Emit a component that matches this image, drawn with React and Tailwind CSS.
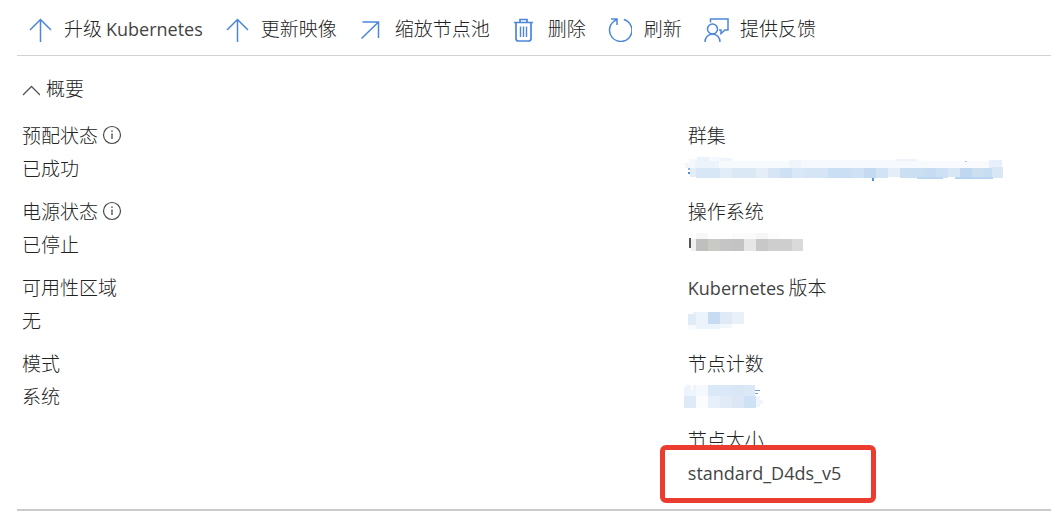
import { useState } from 'react'

const iconProps = {
  width: 24,
  height: 24,
  viewBox: '0 0 24 24',
  fill: 'none',
  stroke: '#4b86d9',
  strokeWidth: 1.5,
  'aria-hidden': true,
}

const ArrowUp = () => (
  <svg {...iconProps}>
    <path d="M12.5 24V1.5M2 12L12.5 1.5L23 12" />
  </svg>
)

const ArrowUpRight = () => (
  <svg {...iconProps}>
    <path d="M2.500 20.500L19.500 4M3.500 4H19.500V20" />
  </svg>
)

const Trash = () => (
  <svg {...iconProps}>
    <path d="M2 4.500H21M4 4.500V20.500Q4 23 6.500 23H16.500Q19 23 19 20.500V4.500M8 4V1.500H15V4" strokeWidth="1.700" />
    <path d="M8.500 8.500V19M11.500 8.500V19M14.500 8.500V19" strokeWidth="1.400" />
  </svg>
)

const Refresh = () => (
  <svg {...iconProps}>
    <path d="M15.800 1.500A11.200 11.200 0 1 1 8.500 1.900M3 1H9V7" />
  </svg>
)

const Feedback = () => (
  <svg {...iconProps} overflow="visible">
    <circle cx="8.500" cy="11" r="5" />
    <path d="M1 24A7.500 8 0 0 1 16 24M6.500 4.500V1H24V12H21L17 15.500V12H15" />
  </svg>
)

const InfoIcon = () => (
  <svg className="mb-1" width="20" height="20" viewBox="0 0 20 20" fill="none" stroke="#4a4a4a" aria-hidden="true">
    <circle cx="10" cy="10" r="8.500" strokeWidth="1.200" />
    <path d="M10 8.500V14M10 5.500V7" strokeWidth="1.300" />
  </svg>
)

const commands = [
  { icon: ArrowUp, label: '升级', product: 'Kubernetes' },
  { icon: ArrowUp, label: '更新映像' },
  { icon: ArrowUpRight, label: '缩放节点池' },
  { icon: Trash, label: '删除' },
  { icon: Refresh, label: '刷新' },
  { icon: Feedback, label: '提供反馈' },
]

// Masked values: [x, y, width, height, colour]
const masks = {
  cluster: {
    viewBox: '-1 2 322 26',
    cells: [
      [0, 8, 16, 5, '#f1f6fc'], [3, 13, 2, 2, '#8db5e3'], [3, 17, 2, 2, '#4b8dd8'],
      [4, 4, 8, 9, '#f5f9fd'], [12, 2, 12, 6, '#eaf2fa'], [24, 2, 12, 6, '#f5f9fd'],
      [10, 6, 24, 7, '#ebf3fb'], [34, 3, 13, 4, '#edf4fb'], [34, 6, 70, 7, '#f7fafd'],
      [104, 5, 12, 8, '#f0f5fb'], [116, 5, 120, 8, '#f6f9fd'], [212, 4, 20, 2, '#eef3fa'],
      [236, 6, 70, 7, '#f8fafd'], [304, 5, 13, 8, '#e7f0fa'],
      [5, 13, 6, 9, '#e2edf8'], [11, 13, 24, 10, '#d8e7f5'], [35, 13, 12, 10, '#e2edf8'],
      [47, 13, 24, 10, '#dae8f6'], [71, 13, 12, 10, '#e4edf8'], [83, 13, 12, 10, '#d7e5f4'],
      [95, 13, 12, 10, '#cee0f3'], [107, 13, 12, 10, '#d9e7f6'], [119, 13, 24, 10, '#d6e5f5'],
      [143, 13, 24, 10, '#cbdff4'], [167, 13, 12, 10, '#cfe1f4'], [179, 13, 12, 10, '#c3daf0'],
      [191, 13, 12, 10, '#d1e3f4'], [203, 13, 12, 9, '#e4edf8'], [215, 13, 24, 10, '#cbdff3'],
      [239, 13, 12, 10, '#c7dcf2'], [251, 13, 12, 10, '#cee1f4'], [263, 13, 12, 9, '#d7e7f6'],
      [275, 13, 12, 10, '#bfd8ef'], [287, 13, 12, 10, '#ccdff1'], [299, 13, 8, 10, '#c7ddf3'],
      [307, 12, 11, 11, '#d9e7f5'], [232, 22, 26, 2, '#bdd7f2'], [270, 22, 38, 2, '#b8d4f0'],
      [187, 23, 2, 3, '#4f94dc'], [280, 6, 2, 1, '#a9c1dd'],
    ],
  },
  os: {
    viewBox: '-2 1 120 26',
    cells: [
      [3, 6, 2, 10, '#555555'], [5, 7, 5, 12, '#f0f0f0'], [10, 1, 12, 6, '#f7f7f7'],
      [46, 1, 24, 6, '#fbfbfb'], [70, 1, 12, 6, '#f6f6f6'], [82, 1, 12, 6, '#fcfcfc'],
      [10, 7, 12, 12, '#bfbfbf'], [22, 7, 12, 12, '#c9c9c6'], [34, 7, 12, 12, '#c5c5c5'],
      [46, 7, 12, 12, '#c3c3c3'], [58, 7, 12, 12, '#e6e6e6'], [70, 7, 12, 12, '#c8c8c8'],
      [82, 7, 24, 12, '#cecece'], [106, 7, 11, 12, '#dadada'],
    ],
  },
  version: {
    viewBox: '-2 2 64 26',
    cells: [
      [2, 7, 8, 11, '#e0ebf8'], [7, 5, 3, 3, '#e6effa'], [10, 5, 12, 12, '#edf3fc'],
      [22, 5, 12, 12, '#c7dcf2'], [34, 5, 12, 12, '#e0eaf7'], [46, 5, 12, 12, '#e9f0fa'],
      [2, 18, 8, 5, '#f8fafd'], [10, 17, 24, 5, '#ebf3fb'], [34, 17, 12, 4, '#f2f6fd'],
    ],
  },
  count: {
    viewBox: '0 1 84 26',
    cells: [
      [0, 3, 12, 9, '#edf4fc'], [2, 1, 10, 2, '#edf4fc'], [7, 1, 2, 5, '#ffffff'],
      [12, 1, 12, 11, '#f5f9fd'], [24, 1, 24, 11, '#dbe8f7'], [48, 1, 12, 11, '#d8e6f6'],
      [60, 1, 11, 11, '#dde8f7'], [71, 6, 5, 1, '#6499d3'], [71, 9, 3, 1, '#78a6da'],
      [0, 12, 12, 12, '#dfeaf8'], [12, 12, 12, 12, '#fbfcfe'], [24, 12, 12, 12, '#e7effa'],
      [36, 12, 12, 12, '#e1ebf8'], [48, 12, 12, 12, '#dbe7f6'], [60, 12, 12, 12, '#cfe1f4'],
      [72, 12, 4, 11, '#eff5fc'], [76, 16, 3, 4, '#eff5fc'],
    ],
  },
}

const Mask = ({ name }) => {
  const { viewBox, cells } = masks[name]
  const [, , width, height] = viewBox.split(' ')
  return (
    <svg className="-ml-1 shrink-0" width={width} height={height} viewBox={viewBox} shapeRendering="crispEdges" aria-hidden="true">
      {cells.map(([x, y, w, h, fill], i) => (
        <rect key={i} x={x} y={y} width={w} height={h} fill={fill} />
      ))}
    </svg>
  )
}

const Latin = ({ children }) => <span className="text-[18px] font-normal text-[#444]">{children}</span>

const leftFields = [
  { label: '预配状态', info: true, value: '已成功' },
  { label: '电源状态', info: true, value: '已停止' },
  { label: '可用性区域', value: '无' },
  { label: '模式', value: '系统' },
]

const rightFields = [
  { label: '群集', mask: 'cluster' },
  { label: '操作系统', mask: 'os' },
  { label: '版本', product: 'Kubernetes', mask: 'version' },
  { label: '节点计数', mask: 'count' },
  { label: '节点大小', size: 'standard_D4ds_v5', highlight: true },
]

function Field({ label, product, info, value, size, mask, highlight }) {
  return (
    <div className="relative">
      <dt className="flex h-[33px] items-center gap-1">
        {product && <Latin>{product}</Latin>}
        {label}
        {info && <InfoIcon />}
      </dt>
      <dd className="flex h-[33px] items-center">
        {mask && <Mask name={mask} />}
        {size && <Latin>{size}</Latin>}
        {value}
      </dd>
      {highlight && (
        <div className="pointer-events-none absolute top-[21px] -left-7 h-[58px] w-[216px] rounded-md border-5 border-[#ea3d2f]" />
      )}
    </div>
  )
}

export default function App() {
  const [open, setOpen] = useState(true)

  return (
    <main className="bg-white pl-[17px] font-['Open_Sans','Noto_Sans_CJK_SC',sans-serif] text-[19px] leading-[33px] font-light text-[#222]">
      <div className="flex gap-[22px] border-b border-[#d2d2d2] pt-[13px] pb-[9px] pl-[11px]">
        {commands.map(({ icon: Icon, label, product }) => (
          <button key={label} type="button" className="flex shrink-0 items-center gap-3 whitespace-nowrap">
            <Icon />
            <span className="flex gap-1">
              {label}
              {product && <Latin>{product}</Latin>}
            </span>
          </button>
        ))}
      </div>

      <section className="border-b-2 border-[#cbcbcb] pt-[17px] pb-[19px] pl-[5px]">
        <button type="button" onClick={() => setOpen(!open)} aria-expanded={open} className="flex items-center gap-1.5">
          <svg className={open ? '' : 'rotate-180'} width="18" height="12" viewBox="0 0 18 12" fill="none" stroke="#555" strokeWidth="1.300" aria-hidden="true">
            <path d="M1 11L9.500 2.500L18 11" />
          </svg>
          概要
        </button>
        {open && (
          <div className="mt-[14px] grid grid-cols-[11fr_6fr]">
            <dl className="flex flex-col gap-[10px]">
              {leftFields.map((f) => <Field key={f.label} {...f} />)}
            </dl>
            <dl className="flex flex-col gap-[10px]">
              {rightFields.map((f) => <Field key={f.label} {...f} />)}
            </dl>
          </div>
        )}
      </section>
    </main>
  )
}
